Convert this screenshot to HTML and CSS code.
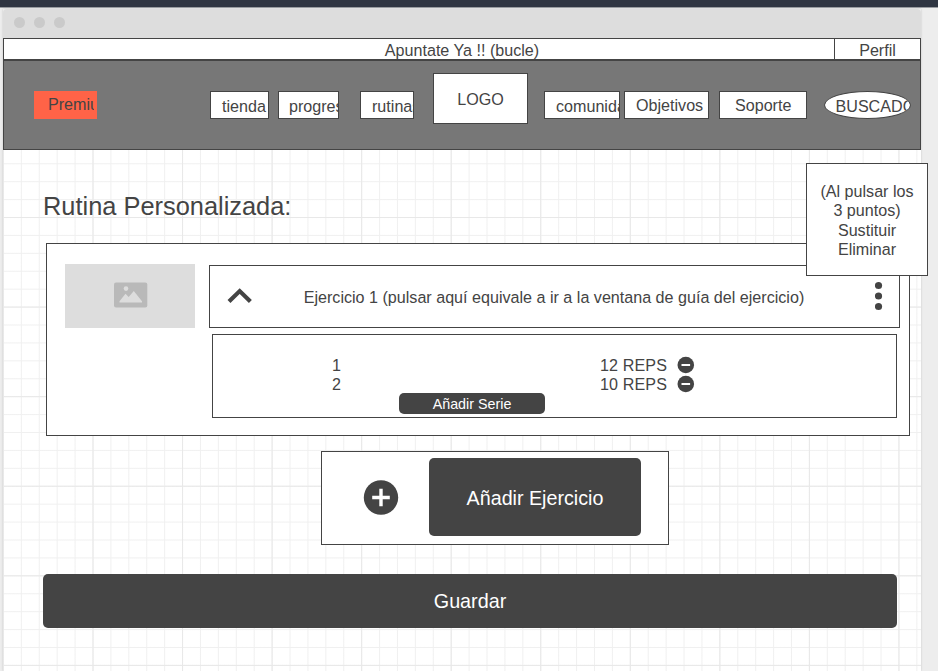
FILE: index.html
```html
<!DOCTYPE html>
<html lang="es">
<head>
<meta charset="utf-8">
<title>Rutina Personalizada</title>
<link rel="stylesheet" href="styles.css">
</head>
<body>
<div class="topbar"></div>
<div class="window">
  <div class="titlebar"><i></i><i></i><i></i></div>
  <div class="promo">
    <div class="promo-text">Apuntate Ya !! (bucle)</div>
    <div class="profile">Perfil</div>
  </div>
  <header class="header">
    <div class="premium"><span>Premium</span></div>
    <div class="nav tienda">tienda</div>
    <div class="nav progreso">progreso</div>
    <div class="nav rutinas">rutinas</div>
    <div class="logo">LOGO</div>
    <div class="nav comunidad">comunidad</div>
    <div class="nav objetivos">Objetivos</div>
    <div class="nav soporte">Soporte</div>
    <div class="nav search">BUSCADOR</div>
  </header>
  <main class="content">
    <h1>Rutina Personalizada:</h1>
    <section class="card">
      <div class="thumb">
        <svg width="34" height="26" viewBox="0 0 34 26"><rect x="0" y="0.5" width="33.3" height="25" rx="2" fill="#b9b9b9"/><circle cx="12" cy="6.6" r="2.3" fill="#ddd"/><path d="M5.5 20.4v-1.2l6-7.4 3.2 3.3 5.1-6.2 8.2 10.3v1.2z" fill="#ddd"/></svg>
      </div>
      <div class="details">
        <div class="exercise">
          <svg class="chevron" width="26" height="16" viewBox="0 0 26 16"><path d="M2 13.5 12.7 3.1 23.4 13.5" fill="none" stroke="#444" stroke-width="4.2"/></svg>
          <span class="exercise-name">Ejercicio 1 (pulsar aquí equivale a ir a la ventana de guía del ejercicio)</span>
          <svg class="dots" width="8" height="30" viewBox="0 0 8 30"><g fill="#444"><circle cx="3.5" cy="4.5" r="3.6"/><circle cx="3.5" cy="15" r="3.6"/><circle cx="3.5" cy="25.5" r="3.6"/></g></svg>
        </div>
        <div class="series">
          <div class="set"><span class="num">1</span><span class="reps">12 REPS</span><svg width="18" height="18" viewBox="0 0 18 18"><circle cx="8.8" cy="9" r="8.3" fill="#444"/><path d="M4.5 9h8.6" stroke="#fff" stroke-width="2"/></svg></div>
          <div class="set"><span class="num">2</span><span class="reps">10 REPS</span><svg width="18" height="18" viewBox="0 0 18 18"><circle cx="8.8" cy="9" r="8.3" fill="#444"/><path d="M4.5 9h8.6" stroke="#fff" stroke-width="2"/></svg></div>
          <button class="add-set">Añadir Serie</button>
        </div>
      </div>
    </section>
    <section class="add-box">
      <svg width="36" height="36" viewBox="0 0 36 36"><circle cx="18" cy="17.5" r="17.2" fill="#444"/><path d="M9.2 17.5h17.6M18 8.7v17.6" stroke="#fff" stroke-width="3.4"/></svg>
      <button class="add-exercise">Añadir Ejercicio</button>
    </section>
    <button class="save">Guardar</button>
  </main>
</div>
<div class="popup">(Al pulsar los<br>3 puntos)<br>Sustituir<br>Eliminar</div>
</body>
</html>
```

FILE: styles.css
```css
* { box-sizing: border-box; }
body {
  margin: 0;
  width: 938px;
  height: 671px;
  overflow: hidden;
  position: relative;
  background: #ededed;
  color: #444;
  font: 16.12px/19.3px "Liberation Sans", Arial, sans-serif;
}
svg { display: block; flex: none; }
button {
  display: block;
  border: 0;
  padding: 0;
  background: #444;
  color: #fff;
  font-family: inherit;
  border-radius: 5px;
}
.topbar { height: 8px; background: #2f3542; border-bottom: 1px solid #9a9da2; }
.window { width: 918px; margin: 1px 0 0 3px; box-shadow: 0 0 2px rgba(0, 0, 0, .16); }
.titlebar {
  height: 29px;
  display: flex;
  gap: 9px;
  padding: 8px 0 0 11px;
  background: #ddd;
  border-radius: 4px 4px 0 0;
}
.titlebar i { width: 11px; height: 11px; border-radius: 50%; background: #cacaca; }
.promo { height: 22px; display: flex; background: #fff; border: 1px solid #444; }
.promo-text, .profile { text-align: center; line-height: 22px; }
.promo-text { flex: 1; padding-left: 86px; }
.profile { width: 86px; border-left: 1px solid #444; }
.header {
  height: 90px;
  display: flex;
  align-items: flex-start;
  padding: 30px 0 0 30px;
  background: #777;
  border: 1px solid #444;
}
.premium { width: 63px; height: 28px; padding: 0 3px 0 14px; margin-right: 113px; background: #ff6347; line-height: 26px; }
.premium span { display: block; overflow: hidden; }
.nav {
  height: 28px;
  overflow: hidden;
  padding-left: 11px;
  background: #fff;
  border: 1px solid #444;
  line-height: 28px;
  white-space: nowrap;
}
.tienda { width: 59px; margin-right: 9px; }
.progreso { width: 61px; margin-right: 21px; padding-left: 10px; }
.rutinas { width: 54px; margin-right: 19px; }
.logo { width: 95px; height: 51px; margin: -18px 16px 0 0; background: #fff; border: 1px solid #444; text-align: center; line-height: 51px; }
.comunidad { width: 76px; margin-right: 4px; }
.objetivos { width: 85px; margin-right: 10px; line-height: 26px; }
.soporte { width: 88px; margin-right: 17px; padding-left: 15px; line-height: 26px; }
.search { width: 87px; border-radius: 50%; padding-left: 10.5px; }
.content {
  height: 521px;
  padding: 41px 0 0 40px;
  background-color: #fff;
  background-image:
    repeating-linear-gradient(to right, transparent -0.55px, #e8e8e8 0.45px, transparent 1.45px, transparent 89px),
    repeating-linear-gradient(to bottom, transparent 66.5px, #e8e8e8 67.5px, transparent 68.5px, transparent 156.08px),
    repeating-linear-gradient(to right, transparent -0.55px, #f0f0f0 0.45px, transparent 1.45px, transparent 17.36px),
    repeating-linear-gradient(to bottom, transparent 12.76px, #f0f0f0 13.76px, transparent 14.76px, transparent 30.676px);
}
h1 { margin: 0; font-size: 25.4px; line-height: 30px; font-weight: 400; }
.card {
  width: 864px;
  height: 193px;
  margin: 22px 0 0 3px;
  padding: 20px 0 0 18px;
  display: flex;
  gap: 14px;
  background: #fff;
  border: 1px solid #444;
}
.thumb { width: 130px; height: 64px; display: flex; align-items: center; justify-content: center; padding: 0 0 2px 2px; background: #ddd; }
.details { width: 691px; padding-top: 1px; }
.exercise { height: 63px; display: flex; align-items: center; padding: 0 16px 0 17px; border: 1px solid #444; }
.chevron, .dots { margin-bottom: 2px; }
.exercise-name { flex: 1; text-align: center; padding: 2px 20px 0 0; white-space: nowrap; }
.series { width: 685px; height: 84px; margin: 6px 0 0 3px; padding-top: 21px; border: 1px solid #444; }
.set { height: 19px; display: flex; align-items: center; padding-left: 119px; }
.set svg { margin-bottom: 2px; }
.num { width: 268px; }
.reps { width: 77px; letter-spacing: .12px; }
.add-set { width: 146px; height: 21px; margin: -1px 0 0 186px; font-size: 14.3px; line-height: 22px; }
.add-box {
  width: 348px;
  height: 94px;
  margin: 15px 0 0 278px;
  padding: 6px 0 0 41px;
  display: flex;
  background: #fff;
  border: 1px solid #444;
}
.add-box svg { margin: 22px 30px 0 0; }
.add-exercise { width: 212px; height: 78px; font-size: 19.7px; line-height: 80px; }
.save { width: 854px; height: 54px; margin-top: 29px; font-size: 19.75px; }
.popup {
  position: absolute;
  left: 806px;
  top: 163px;
  width: 122px;
  height: 113px;
  padding-top: 18px;
  background: #fff;
  border: 1px solid #444;
  text-align: center;
}
```
